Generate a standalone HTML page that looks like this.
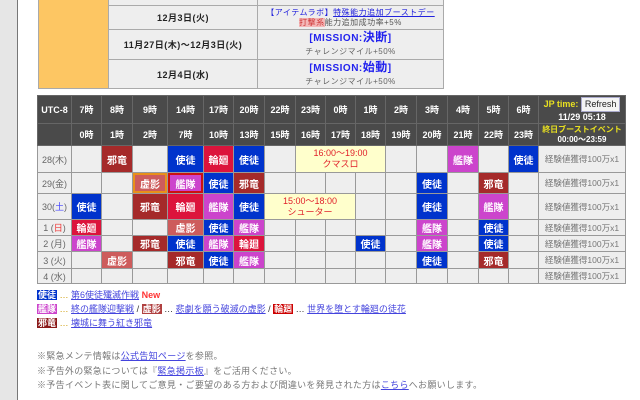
<!DOCTYPE html>
<html><head><meta charset="utf-8"><style>
*{margin:0;padding:0;box-sizing:border-box}
body{width:640px;height:400px;overflow:hidden;background:#fff;font-family:"Liberation Sans","Noto Sans CJK JP",sans-serif;position:relative}
.side{position:absolute;left:0;top:0;width:18px;height:400px;background:#e6e6e6;border-right:1px solid #777}
.top{position:absolute;left:38px;top:-19px;border-collapse:collapse;font-size:9px}
.top td{border:1px solid #aaa;background:#eee;text-align:center;color:#222;font-weight:bold;letter-spacing:0.5px}
.sch{position:absolute;left:37px;top:95px;border-collapse:collapse;table-layout:fixed;font-size:9px}
.sch td{border:1px solid #999;background:#eee;text-align:center;padding:0;overflow:hidden;white-space:nowrap}
.sch tr.h td{background:#4a4a4a;color:#fff;font-weight:bold;border-color:#666}
.sch td.lab{color:#666}
.b{background:#0033cc!important;color:#fff;font-weight:bold;font-size:10px}
.r{background:#dc143c!important;color:#fff;font-weight:bold;font-size:10px}
.d{background:#a52a2a!important;color:#fff;font-weight:bold;font-size:10px}
.p{background:#cc44cc!important;color:#fff;font-weight:bold;font-size:10px}
.s{background:#cd5c5c!important;color:#fff;font-weight:bold;font-size:10px}
.y{background:#ffffcc!important;color:#e0202a;font-size:9px;line-height:11px}
.x{color:#777;font-size:8.5px}
.lg{position:absolute;left:37px;font-size:9px;color:#333;white-space:nowrap}
.lg a{color:#4444dd;text-decoration:underline}
.tg{color:#fff;font-weight:bold;padding:0 1px}
.nt{position:absolute;left:37px;font-size:9px;color:#777;white-space:nowrap;letter-spacing:0.3px}
.nt a{color:#4444dd}
</style></head><body>
<div class="side"></div>
<table class="top">
<tr style="height:24px"><td rowspan="4" style="width:70px;background:#fdc663"></td><td style="width:149px"></td><td style="width:186px"></td></tr>
<tr style="height:24px"><td>12月3日(火)</td><td style="font-weight:normal;font-size:8px;line-height:10px"><span style="color:#2222dd">【アイテムラボ】<u>特殊能力追加ブーストデー</u></span><br><span style="background:#f4b8b8;color:#c33">打撃系</span><span style="color:#555">能力追加成功率+5%</span></td></tr>
<tr style="height:30px"><td>11月27日(木)～12月3日(火)</td><td style="line-height:12px"><span style="color:#2222ee;font-size:10px">[MISSION:<span style="font-size:12px">決断</span>]</span><br><span style="color:#666;font-weight:normal;font-size:8px">チャレンジマイル+50%</span></td></tr>
<tr style="height:29px"><td>12月4日(水)</td><td style="line-height:12px"><span style="color:#2222ee;font-size:10px">[MISSION:<span style="font-size:12px">始動</span>]</span><br><span style="color:#666;font-weight:normal;font-size:8px">チャレンジマイル+50%</span></td></tr>
</table>
<table class="sch">
<colgroup><col style="width:34px"><col style="width:30px"><col style="width:31px"><col style="width:35px"><col style="width:36px"><col style="width:30px"><col style="width:31px"><col style="width:31px"><col style="width:30px"><col style="width:30px"><col style="width:30px"><col style="width:31px"><col style="width:31px"><col style="width:31px"><col style="width:30px"><col style="width:30px"><col style="width:87px"></colgroup>
<tr class="h" style="height:28px"><td>UTC-8</td><td>7時</td><td>8時</td><td>9時</td><td>14時</td><td>17時</td><td>20時</td><td>22時</td><td>23時</td><td>0時</td><td>1時</td><td>2時</td><td>3時</td><td>4時</td><td>5時</td><td>6時</td><td style="color:#e8e020;line-height:11px">JP time: <span style="display:inline-block;background:#f4f4f4;color:#222;font-weight:normal;border:1px solid #aac;padding:1px 3px;font-size:9px">Refresh</span><br><span style="color:#fff">11/29 05:18</span></td></tr>
<tr class="h" style="height:22px"><td></td><td>0時</td><td>1時</td><td>2時</td><td>7時</td><td>10時</td><td>13時</td><td>15時</td><td>16時</td><td>17時</td><td>18時</td><td>19時</td><td>20時</td><td>21時</td><td>22時</td><td>23時</td><td style="color:#e8e020;line-height:10px;font-size:8px">終日ブーストイベント<br><span style="color:#fff">00:00～23:59</span></td></tr>
<tr style="height:27px"><td class="lab">28(木)</td><td></td><td class="d">邪竜</td><td></td><td class="b">使徒</td><td class="r">輪廻</td><td class="b">使徒</td><td></td><td colspan="3" class="y">16:00～19:00<br>クマスロ</td><td></td><td></td><td class="p">艦隊</td><td></td><td class="b">使徒</td><td class="x">経験値獲得100万x1</td></tr>
<tr style="height:21px"><td class="lab">29(金)</td><td></td><td></td><td class="s" style="box-shadow:inset 0 0 0 2px #e8901a">虚影</td><td class="p" style="box-shadow:inset 0 0 0 2px #cc1010">艦隊</td><td class="b">使徒</td><td class="d">邪竜</td><td></td><td></td><td></td><td></td><td></td><td class="b">使徒</td><td></td><td class="d">邪竜</td><td></td><td class="x">経験値獲得100万x1</td></tr>
<tr style="height:26px"><td class="lab">30(<span style="color:#44f">土</span>)</td><td class="b">使徒</td><td></td><td class="d">邪竜</td><td class="r">輪廻</td><td class="p">艦隊</td><td class="b">使徒</td><td colspan="3" class="y">15:00～18:00<br>シューター</td><td></td><td></td><td class="b">使徒</td><td></td><td class="p">艦隊</td><td></td><td class="x">経験値獲得100万x1</td></tr>
<tr style="height:16px"><td class="lab">1 (<span style="color:#e33">日</span>)</td><td class="r">輪廻</td><td></td><td></td><td class="s">虚影</td><td class="b">使徒</td><td class="p">艦隊</td><td></td><td></td><td></td><td></td><td></td><td class="p">艦隊</td><td></td><td class="b">使徒</td><td></td><td class="x">経験値獲得100万x1</td></tr>
<tr style="height:16px"><td class="lab">2 (月)</td><td class="p">艦隊</td><td></td><td class="d">邪竜</td><td class="b">使徒</td><td class="p">艦隊</td><td class="r">輪廻</td><td></td><td></td><td></td><td class="b">使徒</td><td></td><td class="p">艦隊</td><td></td><td class="b">使徒</td><td></td><td class="x">経験値獲得100万x1</td></tr>
<tr style="height:17px"><td class="lab">3 (火)</td><td></td><td class="s">虚影</td><td></td><td class="d">邪竜</td><td class="b">使徒</td><td class="p">艦隊</td><td></td><td></td><td></td><td></td><td></td><td class="b">使徒</td><td></td><td class="d">邪竜</td><td></td><td class="x">経験値獲得100万x1</td></tr>
<tr style="height:15px"><td class="lab">4 (水)</td><td></td><td></td><td></td><td></td><td></td><td></td><td></td><td></td><td></td><td></td><td></td><td></td><td></td><td></td><td></td><td class="x">経験値獲得100万x1</td></tr>
</table>
<div class="lg" style="top:288px"><span class="tg" style="background:#0033cc">使徒</span> <span style="color:#c90">…</span> <a>第6使徒殲滅作戦</a> <span style="color:#f33;font-weight:bold">New</span></div>
<div class="lg" style="top:302px"><span class="tg" style="background:#cc44cc">艦隊</span> <span style="color:#c90">…</span> <a>終の艦隊迎撃戦</a> / <span class="tg" style="background:#b04040">虚影</span> … <a>悲劇を願う破滅の虚影</a> / <span class="tg" style="background:#cc0000">輪廻</span> … <a>世界を堕とす輪廻の徒花</a></div>
<div class="lg" style="top:316px"><span class="tg" style="background:#8b1a1a">邪竜</span> <span style="color:#c90">…</span> <a>壊城に舞う紅き邪竜</a></div>
<div class="nt" style="top:349px">※緊急メンテ情報は<a><u>公式告知ページ</u></a>を参照。</div>
<div class="nt" style="top:364px">※予告外の緊急については『<a><u>緊急掲示板</u></a>』をご活用ください。</div>
<div class="nt" style="top:378px">※予告イベント表に関してご意見・ご要望のある方および間違いを発見された方は<a><u>こちら</u></a>へお願いします。</div>
</body></html>
